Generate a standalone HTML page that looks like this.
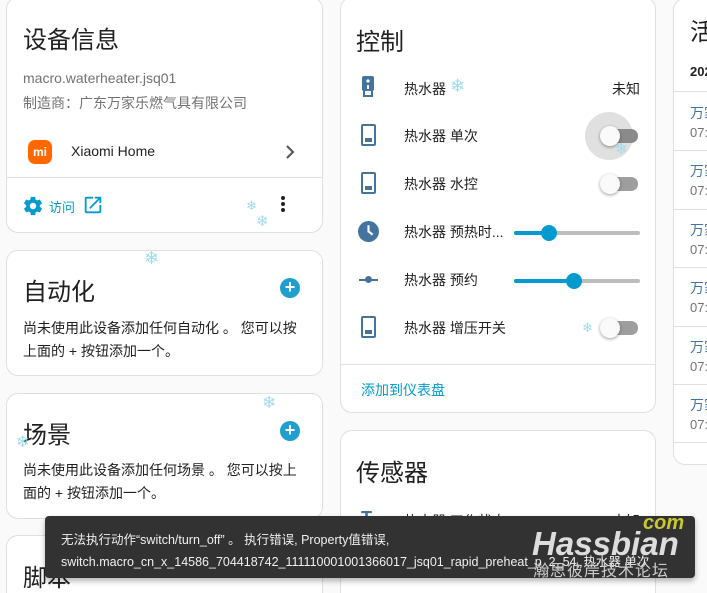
<!DOCTYPE html>
<html><head><meta charset="utf-8">
<style>
*{box-sizing:border-box;margin:0;padding:0}
html,body{width:707px;height:593px;overflow:hidden}
body{background:#fafafa;position:relative;font-family:"Liberation Sans","Noto Sans CJK SC",sans-serif;color:#212121}
.card{position:absolute;background:#fff;border:1px solid #e0e0e0;border-radius:12px;overflow:hidden}
.a{position:absolute;white-space:nowrap}
.t{font-size:24px;color:#212121}
.s{font-size:14px;color:#212121}
.g{font-size:14px;color:#727272}
.hr{position:absolute;left:0;right:0;height:1px;background:#e0e0e0}
.plus{position:absolute;width:20px;height:20px;border-radius:50%;background:#1e9fcf;color:#fff;font-size:18px;line-height:19px;text-align:center;font-weight:bold}
.sw{position:absolute;width:34px;height:14px;border-radius:7px;background:#9e9e9e}
.sw::after{content:"";position:absolute;left:-4px;top:-3px;width:20px;height:20px;border-radius:50%;background:#fafafa;box-shadow:0 1px 3px rgba(0,0,0,.4)}
.ico{position:absolute;width:15px;height:22px;border:2px solid #44739e;border-radius:2px}
.ico::after{content:"";position:absolute;left:2px;right:2px;bottom:2px;height:4px;background:#44739e}
.sl{position:absolute;height:4px;background:#bdbdbd;border-radius:2px}
.bl{color:#44739e;font-size:14px}
</style></head><body>

<div class="card" style="left:6px;top:-3px;width:317px;height:236px">
  <div class="a t" style="left:16px;top:22px">设备信息</div>
  <div class="a g" style="left:16px;top:72px">macro.waterheater.jsq01</div>
  <div class="a g" style="left:16px;top:95px">制造商：广东万家乐燃气具有限公司</div>
  <div class="a" style="left:21px;top:142px;width:24px;height:24px;border-radius:7px;background:#ff6700;color:#fff;font-size:12px;font-weight:bold;text-align:center;line-height:24px">mi</div>
  <div class="a" style="left:64px;top:145px;font-size:14px">Xiaomi Home</div>
  <svg class="a" style="left:277px;top:147px" width="12" height="14" viewBox="0 0 12 14"><path d="M3 1l6 6-6 6" stroke="#555" stroke-width="2" fill="none"/></svg>
  <div class="hr" style="top:179px"></div>
  <svg class="a" style="left:15px;top:197px" width="22" height="22" viewBox="0 0 24 24"><path fill="#039bd0" d="M12 15.5A3.5 3.5 0 1 1 12 8.5a3.5 3.5 0 0 1 0 7m7.43-2.530c.04-.32.07-.64.07-.97s-.03-.66-.07-1l2.110-1.630c.19-.15.24-.42.12-.64l-2-3.460c-.12-.22-.39-.31-.61-.22l-2.490 1c-.52-.39-1.060-.73-1.690-.98l-.37-2.650A.506.506 0 0 0 14 2h-4c-.25 0-.46.18-.5.42l-.37 2.650c-.63.25-1.170.59-1.690.98l-2.490-1c-.22-.09-.49 0-.61.22l-2 3.460c-.13.22-.07.49.12.64L4.570 11c-.04.34-.07.67-.07 1s.03.65.07.97l-2.110 1.660c-.19.15-.25.42-.12.64l2 3.460c.12.22.39.3.61.22l2.490-1.010c.52.4 1.060.74 1.690.99l.37 2.650c.04.24.25.42.5.42h4c.25 0 .46-.18.5-.42l.37-2.650c.63-.26 1.170-.59 1.690-.99l2.490 1.010c.22.08.49 0 .61-.22l2-3.460c.12-.22.07-.49-.12-.64l-2.110-1.660z"/></svg>
  <div class="a" style="left:42px;top:199px;font-size:13px;color:#039bd0">访问</div>
  <svg class="a" style="left:75px;top:196px" width="22" height="22" viewBox="0 0 24 24"><path d="M14 3v2h3.6l-9.8 9.8 1.4 1.4L19 6.4V10h2V3h-7zM19 19H5V5h7V3H5a2 2 0 0 0-2 2v14a2 2 0 0 0 2 2h14a2 2 0 0 0 2-2v-7h-2v7z" fill="#039bd0"/></svg>
  <div class="a" style="left:274px;top:198px;width:4px;line-height:0">
    <div style="width:4px;height:4px;border-radius:2px;background:#222;margin-bottom:2px"></div>
    <div style="width:4px;height:4px;border-radius:2px;background:#222;margin-bottom:2px"></div>
    <div style="width:4px;height:4px;border-radius:2px;background:#222"></div>
  </div>
</div>

<div class="card" style="left:6px;top:250px;width:317px;height:126px">
  <div class="a t" style="left:16px;top:21px">自动化</div>
  <div class="plus" style="left:273px;top:27px">+</div>
  <div class="a s" style="left:16px;top:67px">尚未使用此设备添加任何自动化 。 您可以按</div>
  <div class="a s" style="left:16px;top:90px">上面的 + 按钮添加一个。</div>
</div>

<div class="card" style="left:6px;top:393px;width:317px;height:126px">
  <div class="a t" style="left:16px;top:21px">场景</div>
  <div class="plus" style="left:273px;top:27px">+</div>
  <div class="a s" style="left:16px;top:66px">尚未使用此设备添加任何场景 。 您可以按上</div>
  <div class="a s" style="left:16px;top:89px">面的 + 按钮添加一个。</div>
</div>

<div class="card" style="left:6px;top:535px;width:317px;height:58px;border-bottom:none;border-radius:12px 12px 0 0">
  <div class="a t" style="left:16px;top:22px">脚本</div>
</div>

<div class="card" style="left:340px;top:-3px;width:316px;height:416px">
  <div class="a t" style="left:15px;top:24px">控制</div>
  <svg class="a" style="left:19px;top:78px" width="16" height="22" viewBox="0 0 16 22"><rect x="2" y="0" width="12" height="15" rx="2" fill="#44739e"/><circle cx="8" cy="5" r="1.6" fill="#fff"/><rect x="7" y="9" width="2" height="4" fill="#fff"/><rect x="3" y="15" width="2" height="5" fill="#44739e"/><rect x="11" y="15" width="2" height="5" fill="#44739e"/><rect x="3" y="19" width="10" height="2" fill="#44739e"/></svg>
  <div class="a s" style="left:63px;top:81px">热水器</div>
  <div class="a s" style="left:271px;top:81px">未知</div>
  <div class="ico" style="left:20px;top:126px"></div>
  <div class="a s" style="left:63px;top:128px">热水器 单次</div>
  <div class="a" style="left:244px;top:114px;width:48px;height:48px;border-radius:50%;background:#e0e0e0"></div>
  <div class="sw" style="left:263px;top:131px;background:#8a8a8a"></div>
  <div class="ico" style="left:20px;top:174px"></div>
  <div class="a s" style="left:63px;top:176px">热水器 水控</div>
  <div class="sw" style="left:263px;top:179px"></div>
  <svg class="a" style="left:17px;top:223px" width="21" height="21" viewBox="0 0 20 20"><circle cx="10" cy="10" r="10" fill="#44739e"/><path d="M10 4v6l4 3" stroke="#fff" stroke-width="2" fill="none"/></svg>
  <div class="a s" style="left:63px;top:224px">热水器 预热时...</div>
  <div class="sl" style="left:173px;top:233px;width:126px"></div>
  <div class="sl" style="left:173px;top:233px;width:35px;background:#039bcf"></div>
  <div class="a" style="left:200px;top:227px;width:16px;height:16px;border-radius:50%;background:#039bcf"></div>
  <div class="a" style="left:18px;top:281px;width:19px;height:2px;background:#44739e"></div>
  <div class="a" style="left:24px;top:278px;width:7px;height:7px;border-radius:50%;background:#44739e"></div>
  <div class="a s" style="left:63px;top:272px">热水器 预约</div>
  <div class="sl" style="left:173px;top:281px;width:126px"></div>
  <div class="sl" style="left:173px;top:281px;width:60px;background:#039bcf"></div>
  <div class="a" style="left:225px;top:275px;width:16px;height:16px;border-radius:50%;background:#039bcf"></div>
  <div class="ico" style="left:20px;top:318px"></div>
  <div class="a s" style="left:63px;top:320px">热水器 增压开关</div>
  <div class="sw" style="left:263px;top:323px"></div>
  <div class="hr" style="top:366px"></div>
  <div class="a" style="left:20px;top:382px;font-size:14px;color:#039bcf">添加到仪表盘</div>
</div>

<div class="card" style="left:340px;top:430px;width:316px;height:163px;border-bottom:none;border-radius:12px 12px 0 0">
  <div class="a t" style="left:15px;top:22px">传感器</div>
  <div class="a" style="left:20px;top:77px;font-size:18px;color:#44739e;font-weight:bold">T</div>
  <div class="a s" style="left:63px;top:80px">热水器 工作状态</div>
  <div class="a s" style="left:271px;top:80px">未知</div>
</div>

<div class="card" style="left:673px;top:-2px;width:34px;height:467px;border-right:none;border-radius:12px 0 0 12px">
  <div class="a t" style="left:16px;top:13px">活</div>
  <div class="a" style="left:16px;top:65px;font-size:13px;font-weight:bold">202</div>
  <div class="hr" style="top:92px"></div>
  <div class="a bl" style="left:16px;top:104px">万家</div><div class="a g" style="left:16px;top:126px;font-size:13px">07:4</div>
  <div class="hr" style="top:151px"></div>
  <div class="a bl" style="left:16px;top:162px">万家</div><div class="a g" style="left:16px;top:184px;font-size:13px">07:4</div>
  <div class="hr" style="top:210px"></div>
  <div class="a bl" style="left:16px;top:221px">万家</div><div class="a g" style="left:16px;top:243px;font-size:13px">07:4</div>
  <div class="hr" style="top:268px"></div>
  <div class="a bl" style="left:16px;top:279px">万家</div><div class="a g" style="left:16px;top:301px;font-size:13px">07:4</div>
  <div class="hr" style="top:327px"></div>
  <div class="a bl" style="left:16px;top:338px">万家</div><div class="a g" style="left:16px;top:360px;font-size:13px">07:4</div>
  <div class="hr" style="top:385px"></div>
  <div class="a bl" style="left:16px;top:396px">万家</div><div class="a g" style="left:16px;top:418px;font-size:13px">07:4</div>
  <div class="hr" style="top:443px"></div>
</div>

<div class="a" style="left:144px;top:248px;color:#9fdcef;font-size:18px">❄</div>
<div class="a" style="left:450px;top:76px;color:#9fdcef;font-size:18px">❄</div>
<div class="a" style="left:262px;top:393px;color:#9fdcef;font-size:17px">❄</div>
<div class="a" style="left:16px;top:432px;color:#9fdcef;font-size:16px">❄</div>
<div class="a" style="left:246px;top:198px;color:#9fdcef;font-size:13px">❄</div>
<div class="a" style="left:256px;top:212px;color:#9fdcef;font-size:15px">❄</div>
<div class="a" style="left:615px;top:140px;color:#9fdcef;font-size:15px">❄</div>
<div class="a" style="left:582px;top:320px;color:#9fdcef;font-size:13px">❄</div>

<div class="a" style="left:45px;top:516px;width:650px;height:62px;background:#323232;border-radius:4px;box-shadow:0 3px 6px rgba(0,0,0,.3)">
  <div class="a" style="left:0;top:13px;padding-left:16px;font-size:12.5px;color:#f0f0f0">无法执行动作“switch/turn_off” 。 执行错误, Property值错误,</div>
  <div class="a" style="left:0;top:35px;padding-left:16px;font-size:12.5px;color:#f0f0f0">switch.macro_cn_x_14586_704418742_111110001001366017_jsq01_rapid_preheat_p_2_54, 热水器 单次</div>
  <div class="a" style="left:487px;top:9px;font-size:33px;font-weight:bold;font-style:italic;color:#ddd">Hassbian</div>
  <div class="a" style="left:598px;top:-4px;font-size:20px;font-weight:bold;font-style:italic;color:#c8c832">com</div>
  <div class="a" style="left:488px;top:48px;font-size:16px;line-height:16px;color:#ccc;letter-spacing:1px">瀚思彼岸技术论坛</div>
</div>
</body></html>
